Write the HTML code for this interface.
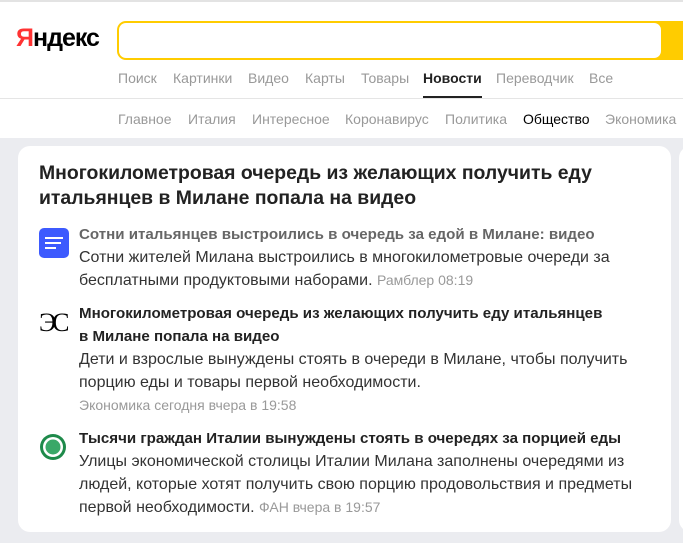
<!DOCTYPE html>
<html><head><meta charset="utf-8"><style>
*{margin:0;padding:0;box-sizing:border-box}
body{width:683px;height:543px;overflow:hidden;background:#ebecf0;font-family:"Liberation Sans",sans-serif;position:relative}
.hdr{position:absolute;left:0;top:0;width:683px;height:138px;background:#fff;border-top:2px solid #e3e3e3}
.logo{position:absolute;left:16px;top:22px;font-size:25px;font-weight:bold;color:#000;letter-spacing:-1px}
.logo span{color:#f33}
.search{position:absolute;left:117px;top:19px;width:600px;height:39px;background:#fc0;border-radius:9px}
.search .in{position:absolute;left:2px;top:2px;width:542px;height:35px;background:#fff;border-radius:7px}
.nav{position:absolute;top:68px;left:118px;font-size:14px;color:#999;white-space:nowrap}
.nav span{position:absolute;top:0}
.nav b{color:#222;position:relative;display:inline-block}
.nav b:after{content:"";position:absolute;left:0;right:0;top:26px;height:3px;background:#222}
.line{position:absolute;left:0;top:96px;width:683px;height:1px;background:#e5e5e5}
.nav2{position:absolute;top:109px;left:0;font-size:14px;color:#999;white-space:nowrap}
.nav2 span{position:absolute;top:0}
.card{position:absolute;left:18px;top:146px;width:653px;height:386px;background:#fff;border-radius:12px}
.card2{position:absolute;left:679px;top:146px;width:40px;height:386px;background:#fff;border-radius:12px}
h1{position:absolute;left:21px;top:15px;font-size:19.4px;line-height:25px;color:#222;font-weight:bold}
.it{position:absolute;left:61px;width:580px;font-size:16px;line-height:23px;color:#333}
.it .t{font-weight:bold;color:#222;font-size:15.1px}
.it .t.v{color:#666}
.m{font-size:14px;color:#999}
.ic{position:absolute;left:21px}
</style></head><body>
<div class="hdr">
<div class="logo"><span>Я</span>ндекс</div>
<div class="search"><div class="in"></div></div>
<div class="nav" style="left:0"><span style="left:118px">Поиск</span><span style="left:173px">Картинки</span><span style="left:248px">Видео</span><span style="left:305px">Карты</span><span style="left:361px">Товары</span><span style="left:423px"><b>Новости</b></span><span style="left:496px">Переводчик</span><span style="left:589px">Все</span></div>
<div class="line"></div>
<div class="nav2"><span style="left:118px">Главное</span><span style="left:188px">Италия</span><span style="left:252px">Интересное</span><span style="left:345px">Коронавирус</span><span style="left:445px">Политика</span><span style="left:523px;color:#000">Общество</span><span style="left:605px">Экономика</span></div>
</div>
<div class="card">
<h1>Многокилометровая очередь из желающих получить еду итальянцев в Милане попала на видео</h1>
<svg class="ic" style="top:82px" width="30" height="30"><rect width="30" height="30" rx="5" fill="#3d5afe"/><rect x="6" y="9" width="18" height="2" fill="#fff"/><rect x="6" y="14" width="16" height="2" fill="#fff"/><rect x="6" y="19" width="11" height="2" fill="#fff"/></svg>
<div class="it" style="top:77px"><div class="t v">Сотни итальянцев выстроились в очередь за едой в Милане: видео</div>Сотни жителей Милана выстроились в многокилометровые очереди за бесплатными продуктовыми наборами. <span class="m">Рамблер 08:19</span></div>
<div class="ic" style="top:162px;font-family:'Liberation Serif',serif;font-size:26px;color:#000;letter-spacing:-4px">ЭС</div>
<div class="it" style="top:156px"><div class="t">Многокилометровая очередь из желающих получить еду итальянцев<br>в Милане попала на видео</div>Дети и взрослые вынуждены стоять в очереди в Милане, чтобы получить порцию еды и товары первой необходимости.<div class="m" style="line-height:22px">Экономика сегодня вчера в 19:58</div></div>
<svg class="ic" style="top:287px" width="28" height="28"><circle cx="14" cy="14" r="13" fill="#1e8a4a"/><circle cx="14" cy="14" r="10" fill="#fff"/><circle cx="14" cy="14" r="7.5" fill="#3aa868"/></svg>
<div class="it" style="top:281px"><div class="t">Тысячи граждан Италии вынуждены стоять в очередях за порцией еды</div>Улицы экономической столицы Италии Милана заполнены очередями из людей, которые хотят получить свою порцию продовольствия и предметы первой необходимости. <span class="m">ФАН вчера в 19:57</span></div>
</div>
<div class="card2"></div>
</body></html>
